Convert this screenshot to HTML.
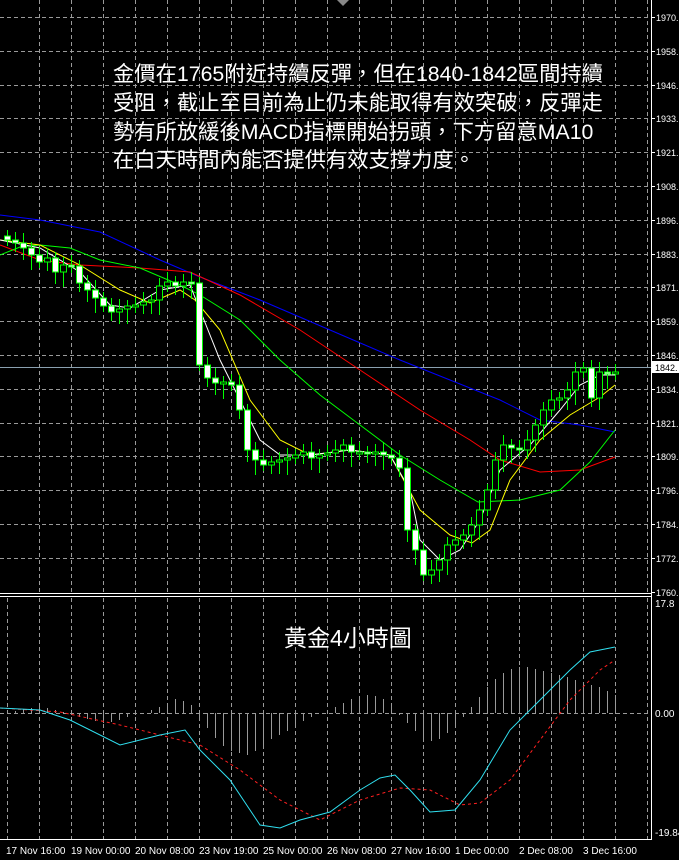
<!DOCTYPE html>
<html><head><meta charset="utf-8"><style>
html,body{margin:0;padding:0;background:#000;width:679px;height:860px;overflow:hidden}
svg{display:block}
.ax{font-family:"Liberation Sans",sans-serif;font-size:10px;fill:#fff}
.ay{font-family:"Liberation Sans",sans-serif;font-size:9px;fill:#fff}
.t{font-family:"Liberation Sans","Noto Sans CJK TC",sans-serif;font-size:21.3px;fill:#fff}
</style></head><body>
<svg id="s" width="679" height="860" xmlns="http://www.w3.org/2000/svg">
<g id="grid" stroke="#9a9a9a" stroke-width="1" stroke-dasharray="4,3"></g>
<line x1="0" y1="367.5" x2="651" y2="367.5" stroke="#8aa0b0"/>
<g id="ma" fill="none" stroke-width="1">
<polyline stroke="#0000ff" points="0,215 40,220 100,232 160,260 200,277 260,300 330,330 400,360 450,380 500,400 540,420 580,425 615,432"/>
<polyline stroke="#ff0000" points="0,245 40,260 80,265 140,268 190,272 240,295 300,330 360,370 420,410 470,440 500,460 540,472 580,470 615,457"/>
<polyline stroke="#00ff00" points="0,255 20,247 40,245 70,248 100,260 140,268 180,285 200,295 240,320 280,360 320,395 360,425 400,455 440,480 478,502 520,500 560,490 590,462 615,430"/>
<polyline stroke="#ffff00" points="0,240 40,245 80,265 120,290 150,303 180,290 195,300 220,330 250,400 280,440 310,455 350,450 390,455 420,510 450,535 472,543 490,530 510,480 540,440 570,415 600,397 615,385"/>
<polyline stroke="#ffffff" points="0,240 40,248 80,272 110,305 130,308 160,290 190,285 200,310 220,360 240,400 260,440 280,455 310,455 350,450 390,455 410,490 420,540 440,560 460,550 480,520 500,470 530,445 560,410 580,385 600,375 615,375"/>
</g>
<g id="cd"></g>
<g id="hist" stroke="#9a9a9a" stroke-width="1"></g>
<polyline fill="none" stroke="#ff2020" stroke-width="1" stroke-dasharray="3,3" points="0,708 60,712 120,725 180,740 200,745 240,770 280,800 320,820 360,800 400,788 430,790 460,805 480,803 510,780 540,740 570,700 600,670 615,660"/>
<polyline fill="none" stroke="#30e0f0" stroke-width="1" points="0,708 40,710 70,720 120,745 160,735 185,730 200,750 230,780 260,825 280,828 300,820 330,812 360,790 380,778 395,775 410,790 430,812 455,810 480,780 510,730 540,700 570,670 590,652 615,647"/>
<line x1="0" y1="593.5" x2="651" y2="593.5" stroke="#fff"/>
<line x1="0" y1="596.5" x2="651" y2="596.5" stroke="#fff"/>
<line x1="651.5" y1="0" x2="651.5" y2="840" stroke="#fff"/>
<line x1="0" y1="839.5" x2="652" y2="839.5" stroke="#fff"/>
<polygon points="337,0 349,0 343,6" fill="#888"/>
<g class="ay" id="lab"></g>
<rect x="652" y="361" width="27" height="12" fill="#fff"/>
<text class="ay" x="655" y="371" style="fill:#000">1842.</text>
<text class="ax" x="655" y="607">17.8</text>
<text class="ax" x="655" y="717">0.00</text>
<text class="ax" x="655" y="836">-19.84</text>
<g class="ax">
<text x="6" y="854">17 Nov 16:00</text><text x="71" y="854">19 Nov 00:00</text><text x="135" y="854">20 Nov 08:00</text><text x="199" y="854">23 Nov 19:00</text><text x="263" y="854">25 Nov 00:00</text><text x="327" y="854">26 Nov 08:00</text><text x="391" y="854">27 Nov 16:00</text><text x="455" y="854">1 Dec 00:00</text><text x="519" y="854">2 Dec 08:00</text><text x="583" y="854">3 Dec 16:00</text>
</g>
<text class="t" x="113" y="81">金價在1765附近持續反彈，但在1840-1842區間持續</text>
<text class="t" x="113" y="110">受阻，截止至目前為止仍未能取得有效突破，反彈走</text>
<text class="t" x="113" y="139">勢有所放緩後MACD指標開始拐頭，下方留意MA10</text>
<text class="t" x="113" y="167">在白天時間內能否提供有效支撐力度。</text>
<text class="t" x="284" y="646" style="font-size:23px">黃金4小時圖</text>
</svg>
<script>
var NS="http://www.w3.org/2000/svg";
function el(p,t,a){var e=document.createElementNS(NS,t);for(var k in a)e.setAttribute(k,a[k]);p.appendChild(e);return e;}
var g=document.getElementById('grid');
for(var x=39;x<651;x+=32){el(g,'line',{x1:x+.5,y1:0,x2:x+.5,y2:593});el(g,'line',{x1:x+.5,y1:598,x2:x+.5,y2:839});}
el(g,'line',{x1:7.5,y1:598,x2:7.5,y2:839});
var labs=[1970,1958,1946,1933,1921,1908,1896,1883,1871,1859,1846,1834,1821,1809,1796,1784,1772,1760];
var lg=document.getElementById('lab');
for(var i=0;i<labs.length;i++){var y=Math.round(17+i*33.8);if(i<17)el(g,'line',{x1:0,y1:y+.5,x2:651,y2:y+.5});
el(lg,'line',{x1:651,y1:y+.5,x2:655,y2:y+.5,stroke:'#fff'});var t=el(lg,'text',{x:656,y:y+4});t.textContent=labs[i]+'.';}
el(g,'line',{x1:0,y1:713.5,x2:651,y2:713.5});
var c=[240,243,248,255,262,258,272,265,266,283,290,298,306,312,309,306,305,302,300,286,282,286,282,283,365,378,383,382,385,410,450,460,465,462,460,458,455,452,458,455,453,450,445,452,452,453,452,455,458,468,530,550,575,570,560,545,540,535,525,510,490,460,445,448,450,440,425,410,400,398,390,372,368,398,372,373,372];
var cd=document.getElementById('cd'),h=document.getElementById('hist');
for(var k=0;k<c.length;k++){var cx=7.5+8*k,o=k?c[k-1]:236,cl=c[k];var bt=Math.min(o,cl),bb=Math.max(o,cl);if(bb-bt<2)bb=bt+2;
el(cd,'line',{x1:cx,y1:bt-6-(k%3)*2,x2:cx,y2:bb+6+(k%4)*3,stroke:'#00ff00'});
el(cd,'rect',{x:cx-3,y:bt,width:6,height:bb-bt,fill:cl>o?'#fff':'#000',stroke:'#00ff00','stroke-width':1});}
var hv=[0,2,4,5,6,5,3,1,-2,-4,-6,-8,-10,-9,-7,-4,-2,0,3,6,10,14,12,8,-5,-15,-25,-33,-38,-40,-42,-38,-32,-26,-22,-18,-12,-8,-4,0,3,6,10,14,16,18,17,14,8,-2,-10,-18,-25,-28,-26,-20,-12,-4,6,16,26,34,40,44,46,46,44,42,40,38,36,33,30,28,26,22,18];
for(var k=0;k<hv.length;k++){var hx=7.5+8*k;el(h,'line',{x1:hx,y1:713,x2:hx,y2:713-hv[k]});}
</script>
</body></html>
